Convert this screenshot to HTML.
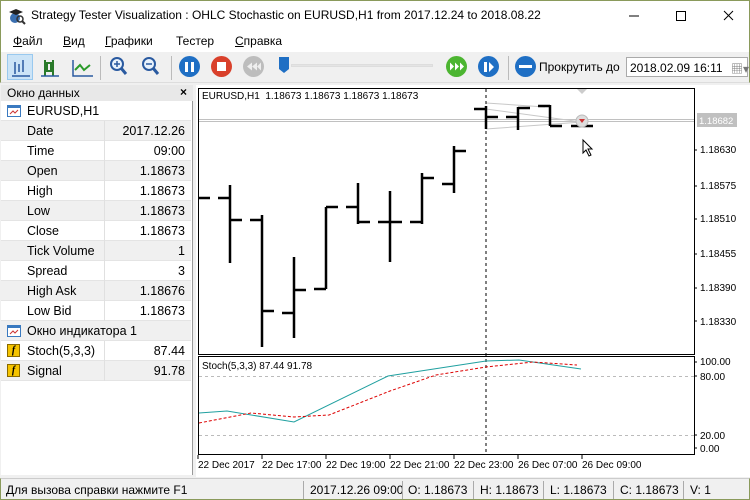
<!DOCTYPE html>
<html><head><meta charset="utf-8"><style>
*{margin:0;padding:0;box-sizing:border-box}
body{width:750px;height:500px;overflow:hidden;background:#f0f0f0;font-family:"Liberation Sans","Noto Sans CJK SC",sans-serif;font-size:12px;color:#000;position:relative}
.abs{position:absolute}
#title{left:0;top:0;width:750px;height:30px;background:#fff;border:1px solid #8a9a5b;border-bottom:none}
#title span{position:absolute;left:30px;top:7px;font-size:12px}
#menu{top:30px;left:0;width:750px;height:22px;background:#fff;border-left:1px solid #8a9a5b;border-right:1px solid #8a9a5b}
#menu span{position:absolute;top:4px;font-size:12px}
#tb{top:52px;left:0;width:750px;height:31px;background:#f0f0f0;border-left:1px solid #8a9a5b;border-right:1px solid #8a9a5b;border-bottom:1px solid #ddd}
.circ{position:absolute;width:21px;height:21px;border-radius:50%}
#panel{left:1px;top:85px;width:192px;height:390px;background:#fff;border-right:1px solid #999}
.row{position:absolute;left:0;width:190px;height:20px;border-bottom:1px solid #e4e4e4;font-size:12.5px}
.row .l{position:absolute;left:26px;top:3px}
.row .v{position:absolute;right:6px;top:3px}
.row .d{position:absolute;left:103px;top:0;width:1px;height:20px;background:#e0e0e0}
.g{background:#f0f0f0}
#status{top:478px;left:0;width:750px;height:22px;background:#f0f0f0;border-top:1px solid #ccc;border-left:1px solid #8a9a5b;border-right:1px solid #8a9a5b;border-bottom:1px solid #8a9a5b}
#status span{position:absolute;top:4px;font-size:12px}
.sep{position:absolute;top:2px;width:1px;height:18px;background:#aaa}
</style></head><body>
<div id="title" class="abs">
<svg class="abs" style="left:7px;top:6px" width="18" height="18"><circle cx="7" cy="11" r="5" fill="#3a6fb0"/><path d="M1 5 L8 2 L15 5 L8 8Z" fill="#222"/><circle cx="12" cy="12" r="3" fill="none" stroke="#333" stroke-width="1.5"/><path d="M14 14 L17 17" stroke="#333" stroke-width="2"/></svg>
<span>Strategy Tester Visualization : OHLC Stochastic on EURUSD,H1 from 2017.12.24 to 2018.08.22</span>
<svg class="abs" style="left:625px;top:8px" width="120" height="14"><path d="M3 7h10" stroke="#000"/><rect x="50.5" y="2.5" width="9" height="9" fill="none" stroke="#000"/><path d="M98 2l9 9M107 2l-9 9" stroke="#000"/></svg>
</div>
<div id="menu" class="abs"><span style="left:12px"><u>Ф</u>айл</span><span style="left:62px"><u>В</u>ид</span><span style="left:104px"><u>Г</u>рафики</span><span style="left:175px">Тестер</span><span style="left:234px"><u>С</u>правка</span></div>
<div id="tb" class="abs">
<div class="abs" style="left:6px;top:2px;width:26px;height:26px;background:#cce4f7;border:1px solid #99c9ef"></div>
<svg class="abs" style="left:8px;top:4px" width="90" height="22"><g stroke="#2a7a2a" stroke-width="2" fill="none"><path d="M6 6v12M10 8v8M14 4v12M3 20h18" stroke="#2a5aa0" stroke-width="1.5"/><path d="M36 4v16M44 4v16" stroke="#2a7a2a"/><rect x="38" y="7" width="4" height="8"/><path d="M32 20h18" stroke="#2a5aa0" stroke-width="1.5"/><path d="M64 4v16h20" stroke="#2a5aa0" stroke-width="1.5"/><path d="M66 14l5-5 4 5 6-5" stroke="#2a9a2a"/></g></svg>
<div class="abs" style="left:99px;top:4px;width:1px;height:24px;background:#bbb"></div>
<svg class="abs" style="left:108px;top:4px" width="55" height="24"><circle cx="8" cy="8" r="6" fill="#e8f2fc" stroke="#2a5aa0" stroke-width="2"/><path d="M5 8h6M8 5v6" stroke="#2a5aa0" stroke-width="1.5"/><path d="M12 12l5 6" stroke="#2a5aa0" stroke-width="3"/><circle cx="40" cy="8" r="6" fill="#e8f2fc" stroke="#2a5aa0" stroke-width="2"/><path d="M37 8h6" stroke="#2a5aa0" stroke-width="1.5"/><path d="M44 12l5 6" stroke="#2a5aa0" stroke-width="3"/></svg>
<div class="abs" style="left:170px;top:4px;width:1px;height:24px;background:#bbb"></div>
<div class="circ" style="left:178px;top:4px;background:#1f6fc4"></div><div class="abs" style="left:184px;top:10px;width:3px;height:10px;background:#fff"></div><div class="abs" style="left:190px;top:10px;width:3px;height:10px;background:#fff"></div>
<div class="circ" style="left:210px;top:4px;background:#d9402b"></div><div class="abs" style="left:216px;top:10px;width:9px;height:9px;background:#fff"></div>
<div class="circ" style="left:242px;top:4px;background:#bdbdbd"></div>
<svg class="abs" style="left:244px;top:9px" width="18" height="11"><path d="M2 5.5l5-4v8zM7 5.5l5-4v8zM12 5.5l4-4v8z" fill="#eee"/></svg>
<div class="abs" style="left:278px;top:5px;width:10px;height:16px;background:#1f6fc4;clip-path:polygon(0 0,100% 0,100% 75%,50% 100%,0 75%)"></div>
<div class="abs" style="left:290px;top:12px;width:142px;height:3px;background:#e4e4e4;border:1px solid #ddd"></div>
<div class="circ" style="left:445px;top:4px;background:#4cb531"></div>
<svg class="abs" style="left:448px;top:9px" width="16" height="11"><path d="M1 1.5l4 4-4 4zM6 1.5l4 4-4 4zM11 1.5l4 4-4 4z" fill="#fff"/></svg>
<div class="circ" style="left:477px;top:4px;background:#1f6fc4"></div><svg class="abs" style="left:481px;top:9px" width="14" height="12"><path d="M2 1h3v10H2zM7 1l5 5-5 5z" fill="#fff"/></svg>
<div class="abs" style="left:507px;top:4px;width:1px;height:24px;background:#bbb"></div>
<div class="circ" style="left:514px;top:4px;background:#1f6fc4"></div><div class="abs" style="left:518px;top:13px;width:13px;height:3px;background:#fff"></div>
<span class="abs" style="left:538px;top:8px">Прокрутить до</span>
<div class="abs" style="left:625px;top:5px;width:122px;height:20px;background:#fff;border:1px solid #aaa"><span class="abs" style="left:3px;top:3px">2018.02.09 16:11</span><span class="abs" style="left:104px;top:2px;color:#777">▦▾</span></div>
</div>
<div id="panel" class="abs">
<div class="abs" style="left:0;top:0;width:192px;height:16px;background:#e8e8e8"><span class="abs" style="left:6px;top:1px">Окно данных</span><span class="abs" style="right:6px;top:0;font-weight:bold">×</span></div>
<div class="row" style="top:16px"><svg class="abs" style="left:6px;top:4px" width="14" height="12"><rect x=".5" y=".5" width="13" height="11" fill="#fff" stroke="#3a7ac0"/><rect x="1" y="1" width="12" height="2" fill="#3a7ac0"/><path d="M3 9l3-3 2 2 3-3" stroke="#c33" fill="none"/></svg><span class="l" style="left:26px">EURUSD,H1</span></div>
<div class="row g" style="top:36px"><span class="l">Date</span><span class="d"></span><span class="v">2017.12.26</span></div>
<div class="row" style="top:56px"><span class="l">Time</span><span class="d"></span><span class="v">09:00</span></div>
<div class="row g" style="top:76px"><span class="l">Open</span><span class="d"></span><span class="v">1.18673</span></div>
<div class="row" style="top:96px"><span class="l">High</span><span class="d"></span><span class="v">1.18673</span></div>
<div class="row g" style="top:116px"><span class="l">Low</span><span class="d"></span><span class="v">1.18673</span></div>
<div class="row" style="top:136px"><span class="l">Close</span><span class="d"></span><span class="v">1.18673</span></div>
<div class="row g" style="top:156px"><span class="l">Tick Volume</span><span class="d"></span><span class="v">1</span></div>
<div class="row" style="top:176px"><span class="l">Spread</span><span class="d"></span><span class="v">3</span></div>
<div class="row g" style="top:196px"><span class="l">High Ask</span><span class="d"></span><span class="v">1.18676</span></div>
<div class="row" style="top:216px"><span class="l">Low Bid</span><span class="d"></span><span class="v">1.18673</span></div>
<div class="row g" style="top:236px"><svg class="abs" style="left:6px;top:4px" width="14" height="12"><rect x=".5" y=".5" width="13" height="11" fill="#fff" stroke="#3a7ac0"/><rect x="1" y="1" width="12" height="2" fill="#3a7ac0"/><path d="M3 9l3-3 2 2 3-3" stroke="#c33" fill="none"/></svg><span class="l">Окно индикатора 1</span></div>
<div class="row" style="top:256px"><div class="abs" style="left:6px;top:3px;width:13px;height:13px;background:#f5c400;border:1px solid #8a6a00;font:italic bold 10px 'Liberation Serif';text-align:center">f</div><span class="l">Stoch(5,3,3)</span><span class="d"></span><span class="v">87.44</span></div>
<div class="row g" style="top:276px"><div class="abs" style="left:6px;top:3px;width:13px;height:13px;background:#f5c400;border:1px solid #8a6a00;font:italic bold 10px 'Liberation Serif';text-align:center">f</div><span class="l">Signal</span><span class="d"></span><span class="v">91.78</span></div>
</div>
<svg class="abs" style="left:196px;top:85px" width="554" height="392" viewBox="196 85 554 392">
<rect x="196" y="85" width="554" height="392" fill="#fff"/>
<rect x="198.5" y="88.5" width="496" height="266" fill="#fff" stroke="#000"/>
<rect x="198.5" y="356.5" width="496" height="98" fill="#fff" stroke="#000"/>
<path d="M199 119.5H694M199 121.5H694" stroke="#c0c0c0"/>
<path d="M486 109L582 122M486 129L582 122M486 103L545 107" stroke="#c8c8c8"/>
<g stroke="#000" stroke-width="2.5" fill="none">
<path d="M199 198h11M230 185v78M218 198h12M230 220h12"/>
<path d="M262 215v132M250 220h12M262 311h12"/>
<path d="M294 257v81M282 313h12M294 290h12"/>
<path d="M326 207v82M314 289h12M326 207h12"/>
<path d="M358 183v41M346 207h12M358 222h12"/>
<path d="M390 191v71M378 222h24"/>
<path d="M422 173v51M410 222h12M422 178h12"/>
<path d="M454 146v47M442 184h12M454 151h12"/>
<path d="M486 106v23M474 109h12M486 117h12"/>
<path d="M518 107v23M506 117h12M518 108h12"/>
<path d="M550 105v21M538 106h12M550 126h12"/>
<path d="M571 126h22"/>
</g>
<path d="M486 89V454" stroke="#000" stroke-dasharray="3,3"/>
<path d="M577 89h10l-5 5z" fill="#ccc"/>
<circle cx="582" cy="121" r="6" fill="#ddd" stroke="#bbb"/><path d="M579 119h6l-3 4z" fill="#c33"/>
<path d="M583 140v13l3-3 3 6 2-1-3-6h4z" fill="#fff" stroke="#000"/>
<rect x="697" y="113" width="40" height="14" fill="#c0c0c0"/>
<text x="699" y="124" fill="#fff" font-size="9.5" font-family="Liberation Sans">1.18682</text>
<text x="202" y="99" font-size="10" font-family="Liberation Sans" xml:space="preserve">EURUSD,H1  1.18673 1.18673 1.18673 1.18673</text>
<g font-size="10" font-family="Liberation Sans" fill="#000">
<text x="700" y="153">1.18630</text><text x="700" y="189">1.18575</text><text x="700" y="222">1.18510</text><text x="700" y="257">1.18455</text><text x="700" y="291">1.18390</text><text x="700" y="325">1.18330</text>
<text x="700" y="365">100.00</text><text x="700" y="380">80.00</text><text x="700" y="439">20.00</text><text x="700" y="452">0.00</text>
<text x="202" y="369">Stoch(5,3,3) 87.44 91.78</text>
<text x="198" y="468">22 Dec 2017</text><text x="262" y="468">22 Dec 17:00</text><text x="326" y="468">22 Dec 19:00</text><text x="390" y="468">22 Dec 21:00</text><text x="454" y="468">22 Dec 23:00</text><text x="518" y="468">26 Dec 07:00</text><text x="582" y="468">26 Dec 09:00</text>
</g>
<path d="M694 150h3M694 186h3M694 219h3M694 254h3M694 288h3M694 321h3M694 362h3M694 376h3M694 435h3M694 448h3M198 455v4M262 455v4M326 455v4M390 455v4M454 455v4M518 455v4M582 455v4" stroke="#000"/>
<path d="M199 376.5H694M199 435.5H694" stroke="#bbb" stroke-dasharray="3,3"/>
<polyline points="199,413 227,411 294,422 388,376 486,361 519,360 581,369" fill="none" stroke="#20a0a0" stroke-width="1"/>
<polyline points="199,423 251,413 294,417 329,415 390,391 436,375 486,367 533,362 577,365" fill="none" stroke="#d00" stroke-dasharray="3,2"/>
</svg>
<div id="status" class="abs"><span style="left:5px">Для вызова справки нажмите F1</span>
<div class="sep" style="left:302px"></div><span style="left:309px">2017.12.26 09:00</span>
<div class="sep" style="left:401px"></div><span style="left:407px">O: 1.18673</span>
<div class="sep" style="left:472px"></div><span style="left:479px">H: 1.18673</span>
<div class="sep" style="left:542px"></div><span style="left:549px">L: 1.18673</span>
<div class="sep" style="left:612px"></div><span style="left:619px">C: 1.18673</span>
<div class="sep" style="left:682px"></div><span style="left:689px">V: 1</span></div>
</body></html>
